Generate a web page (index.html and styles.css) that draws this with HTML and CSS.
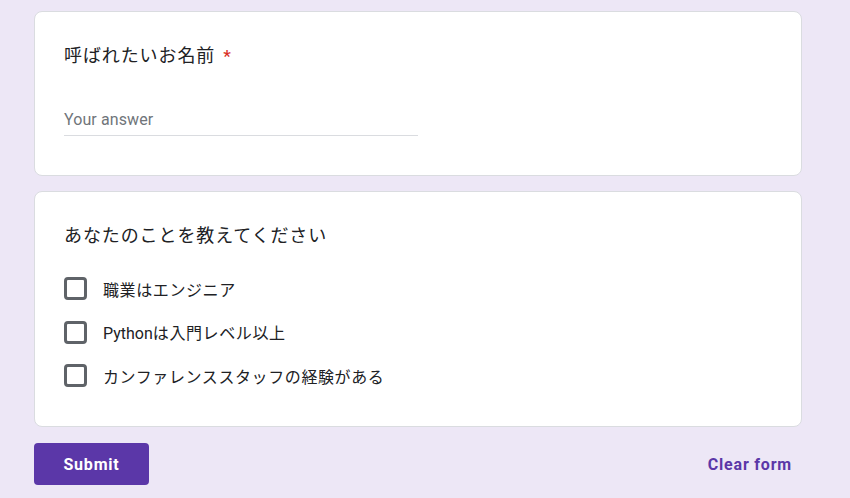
FILE: index.html
```html
<!DOCTYPE html>
<html lang="ja">
<head>
<meta charset="utf-8">
<link rel="stylesheet" href="styles.css">
</head>
<body>
<main class="form">
  <section class="card card-name">
    <div class="q-title">呼ばれたいお名前<span class="req">*</span></div>
    <div class="answer"><span class="placeholder">Your answer</span></div>
  </section>
  <section class="card card-about">
    <div class="q-title">あなたのことを教えてください</div>
    <ul class="options">
      <li class="option"><span class="box"></span><span class="label">職業はエンジニア</span></li>
      <li class="option"><span class="box"></span><span class="label"><span class="latin">Python</span>は入門レベル以上</span></li>
      <li class="option"><span class="box"></span><span class="label">カンファレンススタッフの経験がある</span></li>
    </ul>
  </section>
  <div class="actions">
    <button class="submit" type="button">Submit</button>
    <button class="clear" type="button">Clear form</button>
  </div>
</main>
</body>
</html>
```
FILE: styles.css
```css
html, body {
  margin: 0;
  padding: 0;
  background: #ede7f6;
}
body {
  font-family: Roboto, "Noto Sans CJK JP", sans-serif;
  color: #202124;
  height: 498px;
  overflow: hidden;
}
.form {
  width: 768px;
  margin-left: 34px;
  padding-top: 11px;
}
.card {
  background: #fff;
  border: 1px solid #dadce0;
  border-radius: 8px;
  padding: 30px 29px 0;
  box-sizing: border-box;
}
.card-name {
  height: 165px;
}
.card-about {
  margin-top: 15px;
  height: 236px;
}
.q-title {
  font-family: "Noto Sans CJK JP", sans-serif;
  font-size: 18px;
  letter-spacing: 0.9px;
  line-height: 24px;
  color: #202124;
}
.req {
  color: #d93025;
  margin-left: 8px;
  font-family: Roboto, sans-serif;
  font-weight: 500;
  font-size: 17px;
}
.answer {
  width: 354px;
  margin-top: 40px;
  padding-bottom: 3px;
  border-bottom: 1px solid #dadce0;
  line-height: 24px;
  height: 24px;
}
.placeholder {
  font-family: Roboto, sans-serif;
  font-size: 16px;
  color: #70757a;
  letter-spacing: 0.1px;
}
.options {
  list-style: none;
  margin: 21px 0 0;
  padding: 0;
}
.option {
  height: 43.5px;
  display: flex;
  align-items: center;
}
.box {
  width: 23px;
  height: 23px;
  box-sizing: border-box;
  border: 3px solid #5f6368;
  border-radius: 4px;
  flex: none;
}
.label {
  margin-left: 16px;
  font-family: "Noto Sans CJK JP", sans-serif;
  font-size: 16px;
  letter-spacing: 0.6px;
  color: #202124;
}
.latin {
  font-family: Roboto, sans-serif;
  letter-spacing: 0;
}
.actions {
  margin-top: 16px;
  display: flex;
  justify-content: space-between;
  align-items: center;
}
.submit {
  width: 115px;
  height: 42px;
  border: none;
  border-radius: 4px;
  background: #5b37a8;
  color: #fff;
  font-family: Roboto, sans-serif;
  font-weight: 700;
  font-size: 16px;
  letter-spacing: 0.8px;
  padding: 0;
}
.clear {
  background: none;
  border: none;
  padding: 0 10px 0 0;
  color: #5b37a8;
  font-family: Roboto, sans-serif;
  font-weight: 700;
  font-size: 16px;
  letter-spacing: 0.8px;
}
```
